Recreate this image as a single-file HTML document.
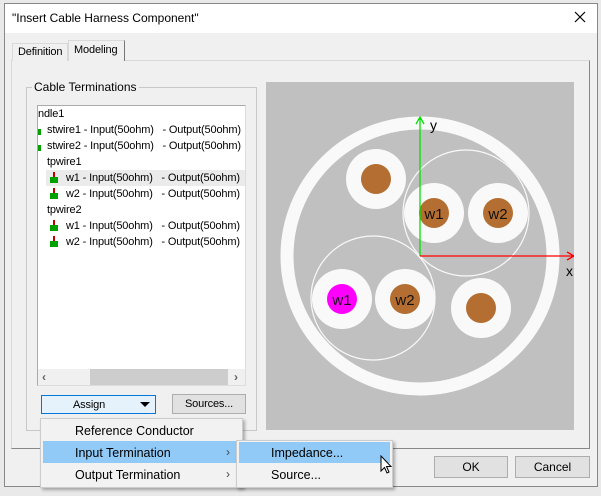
<!DOCTYPE html>
<html><head><meta charset="utf-8"><style>
*{box-sizing:border-box;margin:0;padding:0}
body{width:601px;height:496px;position:relative;overflow:hidden;background:#e9e9e9;font-family:"Liberation Sans",sans-serif;font-size:12px;color:#000}
.a{position:absolute}
.t{position:absolute;white-space:nowrap;line-height:16px}
.l{font-size:11px;letter-spacing:-0.15px}
.btn{position:absolute;background:#e1e1e1;border:1px solid #adadad;text-align:center;line-height:18px}
.ic{position:absolute;width:8px;height:11px}
.ic:before{content:"";position:absolute;left:3px;top:0;width:2px;height:6px;background:#c00000}
.ic:after{content:"";position:absolute;left:0;top:5px;width:8px;height:6px;background:#00a000}
</style></head><body>
<div class="a" style="left:4px;top:3px;width:594px;height:484px;background:#f0f0f0;border:1px solid #888"></div>
<div class="a" style="left:5px;top:4px;width:592px;height:29px;background:#fff"></div>
<div class="t" style="left:12px;top:10px;font-size:12px">"Insert Cable Harness Component"</div>
<svg class="a" style="left:574px;top:11px" width="12" height="12"><path d="M1 1L11 11M11 1L1 11" stroke="#000" stroke-width="1.2"/></svg>
<div class="a" style="left:11px;top:60px;width:579px;height:389px;border:1px solid #d9d9d9;border-right-color:#888;border-bottom-color:#888;background:#f0f0f0"></div>
<div class="a" style="left:12px;top:43px;width:56px;height:18px;border:1px solid #d9d9d9;border-bottom:none;background:#f0f0f0"></div>
<div class="t l" style="left:18px;top:44px">Definition</div>
<div class="a" style="left:68px;top:40px;width:57px;height:21px;border:1px solid #d9d9d9;border-right-color:#777;border-bottom:none;background:#f0f0f0"></div>
<div class="t l" style="left:74px;top:42px">Modeling</div>
<div class="a" style="left:26px;top:87px;width:231px;height:344px;border:1px solid #c8c8c8"></div>
<div class="t" style="left:32px;top:79px;background:#f0f0f0;padding:0 2px">Cable Terminations</div>
<div class="a" style="left:37px;top:105px;width:209px;height:281px;background:#fff;border:1px solid #aaa;border-right-color:#ddd;border-bottom-color:#ddd;overflow:hidden">
<div class="a" style="left:8px;top:64px;width:199px;height:16px;background:#ebebeb"></div>
<div class="t l" style="left:0px;top:0px">ndle1</div>
<div class="t l" style="left:9px;top:16px">stwire1 - Input(50ohm)&nbsp;&nbsp; - Output(50ohm)</div>
<div class="t l" style="left:9px;top:32px">stwire2 - Input(50ohm)&nbsp;&nbsp; - Output(50ohm)</div>
<div class="a" style="left:0px;top:23px;width:3px;height:6px;background:#00a000"></div>
<div class="a" style="left:0px;top:39px;width:3px;height:6px;background:#00a000"></div>
<div class="t l" style="left:9px;top:48px">tpwire1</div>
<div class="ic" style="left:12px;top:66px"></div>
<div class="t l" style="left:28px;top:64px">w1 - Input(50ohm)&nbsp;&nbsp; - Output(50ohm)</div>
<div class="ic" style="left:12px;top:82px"></div>
<div class="t l" style="left:28px;top:80px">w2 - Input(50ohm)&nbsp;&nbsp; - Output(50ohm)</div>
<div class="t l" style="left:9px;top:96px">tpwire2</div>
<div class="ic" style="left:12px;top:114px"></div>
<div class="t l" style="left:28px;top:112px">w1 - Input(50ohm)&nbsp;&nbsp; - Output(50ohm)</div>
<div class="ic" style="left:12px;top:130px"></div>
<div class="t l" style="left:28px;top:128px">w2 - Input(50ohm)&nbsp;&nbsp; - Output(50ohm)</div>
</div>
<div class="a" style="left:38px;top:369px;width:207px;height:16px;background:#f0f0f0"></div>
<div class="a" style="left:90px;top:369px;width:138px;height:16px;background:#cdcdcd"></div>
<div class="t" style="left:42px;top:369px;color:#606060;font-weight:bold">&lsaquo;</div>
<div class="t" style="left:234px;top:369px;color:#606060;font-weight:bold">&rsaquo;</div>
<div class="a" style="left:41px;top:395px;width:115px;height:19px;background:#e5f1fb;border:1px solid #0078d7"></div>
<div class="t l" style="left:73px;top:397px">Assign</div>
<svg class="a" style="left:140px;top:402px" width="10" height="6"><path d="M0 0H10L5 5Z" fill="#000"/></svg>
<div class="btn l" style="left:172px;top:394px;width:74px;height:20px">Sources...</div>
<svg class="a" style="left:266px;top:82px" width="308" height="348" viewBox="266 82 308 348">
<rect x="266" y="82" width="308" height="348" fill="#c0c0c0"/>
<circle cx="420" cy="256" r="133" fill="none" stroke="#f9f9f9" stroke-width="13"/>
<circle cx="466" cy="213" r="63" fill="none" stroke="#f9f9f9" stroke-width="1.2"/>
<circle cx="373" cy="298" r="62" fill="none" stroke="#f9f9f9" stroke-width="1.2"/>
<g fill="#f9f9f9"><circle cx="376" cy="179" r="30"/><circle cx="434" cy="213" r="30"/><circle cx="498" cy="213" r="30"/><circle cx="342" cy="299" r="30"/><circle cx="405" cy="299" r="30"/><circle cx="481" cy="308" r="30"/></g>
<g fill="#b46e31"><circle cx="376" cy="179" r="15"/><circle cx="434" cy="213" r="15"/><circle cx="498" cy="213" r="15"/><circle cx="405" cy="299" r="15"/><circle cx="481" cy="308" r="15"/></g>
<circle cx="342" cy="299" r="15" fill="#ff00ff"/>
<g font-family="Liberation Sans,sans-serif" font-size="15" text-anchor="middle" fill="#111"><text x="434" y="219">w1</text><text x="498" y="219">w2</text><text x="342" y="305">w1</text><text x="405" y="305">w2</text></g>
<path d="M420 256V118M416 124L420 117L424 124" stroke="#00e000" stroke-width="1.3" fill="none"/>
<path d="M420 256H573M567 252L574 256L567 260" stroke="#ff0000" stroke-width="1.3" fill="none"/>
<text x="430" y="130" font-family="Liberation Sans,sans-serif" font-size="14">y</text>
<text x="566" y="276" font-family="Liberation Sans,sans-serif" font-size="14">x</text>
</svg>
<div class="btn" style="left:434px;top:456px;width:74px;height:22px;line-height:20px">OK</div>
<div class="btn" style="left:515px;top:456px;width:75px;height:22px;line-height:20px">Cancel</div>
<div class="a" style="left:40px;top:418px;width:203px;height:70px;background:#f2f2f2;border:1px solid #ccc;box-shadow:2px 2px 3px rgba(0,0,0,.3)"></div>
<div class="a" style="left:43px;top:441px;width:196px;height:22px;background:#91c9f7"></div>
<div class="t" style="left:75px;top:423px;font-size:12.5px">Reference Conductor</div>
<div class="t" style="left:75px;top:445px;font-size:12.5px">Input Termination</div>
<div class="t" style="left:75px;top:467px;font-size:12.5px">Output Termination</div>
<div class="t" style="left:226px;top:444px;color:#444">&rsaquo;</div>
<div class="t" style="left:226px;top:466px;color:#444">&rsaquo;</div>
<div class="a" style="left:236px;top:440px;width:157px;height:48px;background:#f2f2f2;border:1px solid #ccc;box-shadow:2px 2px 3px rgba(0,0,0,.3)"></div>
<div class="a" style="left:239px;top:442px;width:151px;height:21px;background:#91c9f7"></div>
<div class="t" style="left:271px;top:445px;font-size:12.5px">Impedance...</div>
<div class="t" style="left:271px;top:467px;font-size:12.5px">Source...</div>
<svg class="a" style="left:380px;top:455px" width="14" height="20"><path d="M1 1V16L4.5 12.5L7 18L9 17L6.5 11.5H11Z" fill="#fff" stroke="#000" stroke-width="1"/></svg>
</body></html>
